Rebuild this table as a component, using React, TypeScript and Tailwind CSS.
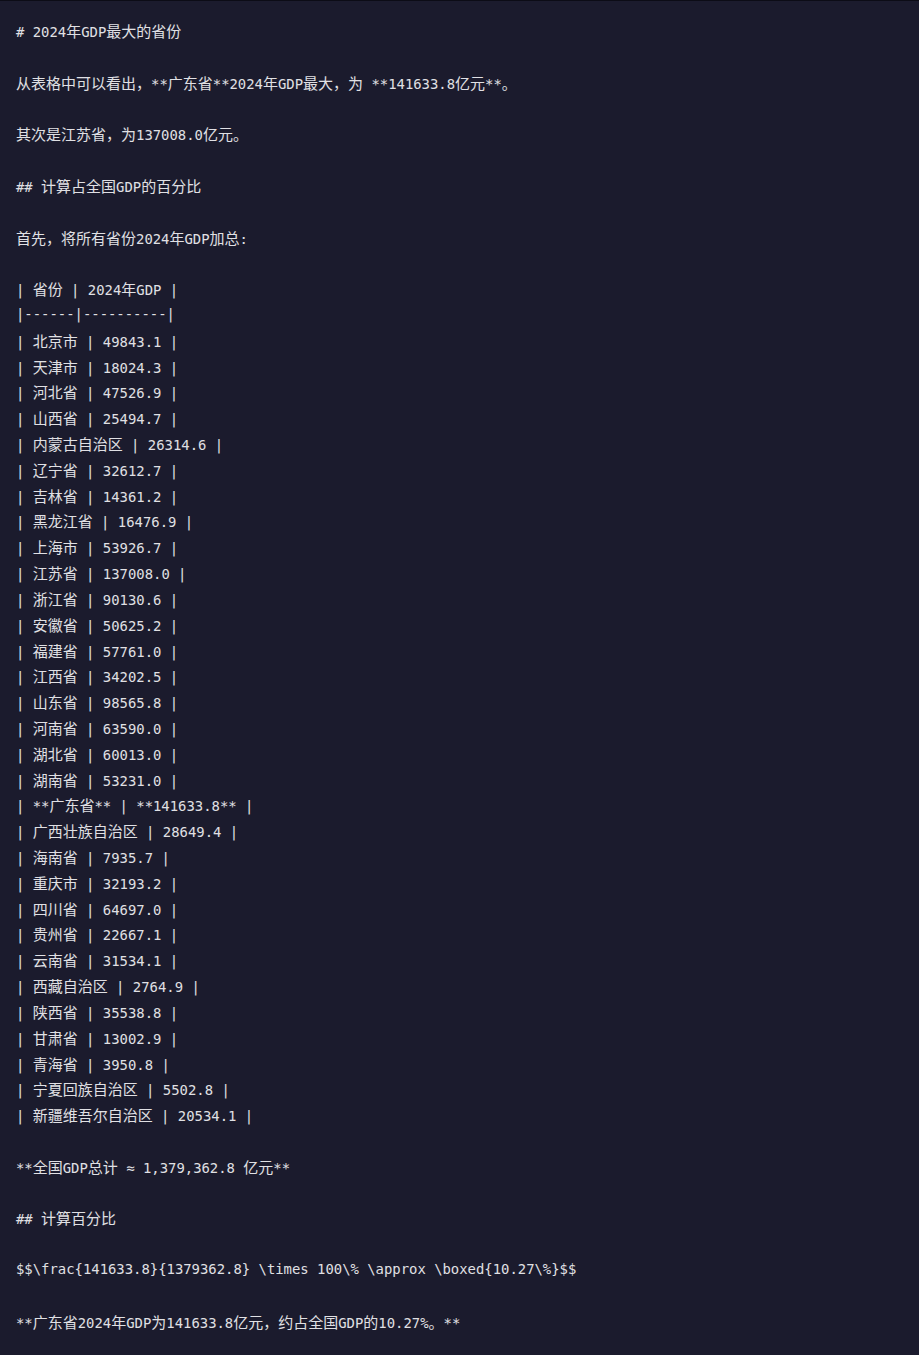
import React from "react";

const provinces: [string, string][] = [
  ["北京市", "49843.1"],
  ["天津市", "18024.3"],
  ["河北省", "47526.9"],
  ["山西省", "25494.7"],
  ["内蒙古自治区", "26314.6"],
  ["辽宁省", "32612.7"],
  ["吉林省", "14361.2"],
  ["黑龙江省", "16476.9"],
  ["上海市", "53926.7"],
  ["江苏省", "137008.0"],
  ["浙江省", "90130.6"],
  ["安徽省", "50625.2"],
  ["福建省", "57761.0"],
  ["江西省", "34202.5"],
  ["山东省", "98565.8"],
  ["河南省", "63590.0"],
  ["湖北省", "60013.0"],
  ["湖南省", "53231.0"],
  ["**广东省**", "**141633.8**"],
  ["广西壮族自治区", "28649.4"],
  ["海南省", "7935.7"],
  ["重庆市", "32193.2"],
  ["四川省", "64697.0"],
  ["贵州省", "22667.1"],
  ["云南省", "31534.1"],
  ["西藏自治区", "2764.9"],
  ["陕西省", "35538.8"],
  ["甘肃省", "13002.9"],
  ["青海省", "3950.8"],
  ["宁夏回族自治区", "5502.8"],
  ["新疆维吾尔自治区", "20534.1"],
];

const lines: string[] = [
  "# 2024年GDP最大的省份",
  "",
  "从表格中可以看出，**广东省**2024年GDP最大，为 **141633.8亿元**。",
  "",
  "其次是江苏省，为137008.0亿元。",
  "",
  "## 计算占全国GDP的百分比",
  "",
  "首先，将所有省份2024年GDP加总:",
  "",
  "| 省份 | 2024年GDP |",
  "|------|----------|",
  ...provinces.map(([n, v]) => `| ${n} | ${v} |`),
  "",
  "**全国GDP总计 ≈ 1,379,362.8 亿元**",
  "",
  "## 计算百分比",
  "",
  "$$\\frac{141633.8}{1379362.8} \\times 100\\% \\approx \\boxed{10.27\\%}$$",
  "",
  "**广东省2024年GDP为141633.8亿元，约占全国GDP的10.27%。**",
];

const CJK = /([\u3000-\u303f\u4e00-\u9fff\uff00-\uffef]+)/;

function Line({ text }: { text: string }) {
  const parts = text.split(CJK).filter((p) => p.length > 0);
  return (
    <div className="h-[25.82px] whitespace-pre">
      {parts.length === 0
        ? "\u00a0"
        : parts.map((p, i) =>
            CJK.test(p) ? (
              <span key={i} className="font-['Noto_Sans_CJK_SC',sans-serif] text-[15px]">
                {p}
              </span>
            ) : (
              <span key={i}>{p}</span>
            )
          )}
    </div>
  );
}

export default function App() {
  return (
    <div className="min-h-screen bg-[#1b1b2d] border-t border-[#0c0c16]">
      <div className="pl-[16px] pt-[17px] pb-[20px] text-[13.9px] leading-[25.82px] text-[#e0e0e4] font-['DejaVu_Sans_Mono','Noto_Sans_CJK_SC',monospace]">
        {lines.map((l, i) => (
          <Line key={i} text={l} />
        ))}
      </div>
    </div>
  );
}
